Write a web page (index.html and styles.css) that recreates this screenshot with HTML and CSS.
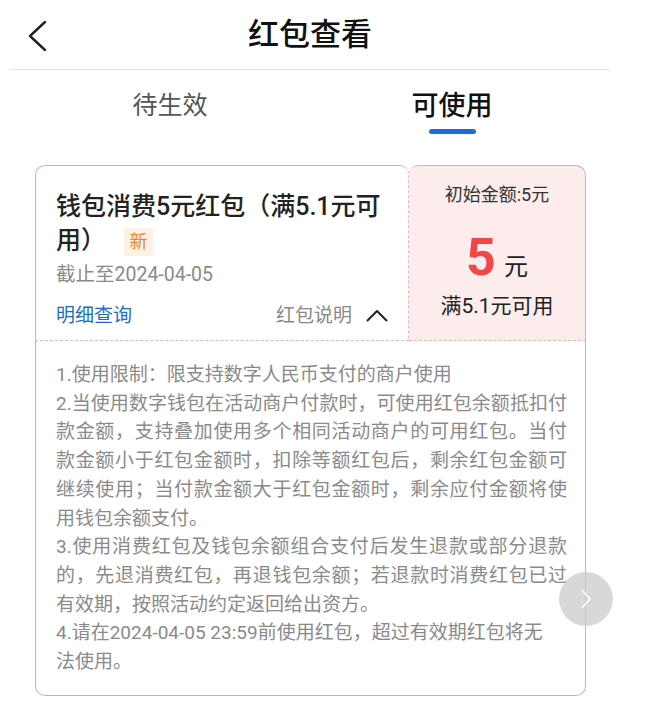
FILE: index.html
```
<!DOCTYPE html>
<html lang="zh-CN">
<head>
    <meta charset="UTF-8">
    <meta name="viewport" content="width=device-width, initial-scale=1.0">
    <title>红包查看</title>
    <link rel="stylesheet" href="styles.css">
</head>
<body>
    <div class="page">
        <header class="topbar">
            <svg class="back" width="24" height="32" viewBox="0 0 24 32">
                <polyline points="18,2 3,16 18,30" fill="none" stroke="#222" stroke-width="2.4" stroke-linecap="round" stroke-linejoin="round"/>
            </svg>
            <h1>红包查看</h1>
        </header>
        <nav class="tabs">
            <div class="tab">待生效</div>
            <div class="tab active">可使用<span class="bar"></span></div>
        </nav>
        <div class="card">
            <div class="card-top">
                <div class="info">
                    <h2 class="name">钱包消费5元红包（满5.1元可用）<span class="tag">新</span></h2>
                    <p class="date">截止至2024-04-05</p>
                    <div class="links">
                        <span class="detail">明细查询</span>
                        <span class="explain">红包说明
                            <svg width="22" height="12" viewBox="0 0 22 12">
                                <polyline points="1,11 11,1 21,11" fill="none" stroke="#222" stroke-width="2" stroke-linejoin="round"/>
                            </svg>
                        </span>
                    </div>
                </div>
                <div class="amount">
                    <p class="init">初始金额:5元</p>
                    <p class="value"><span class="num">5</span><span class="unit">元</span></p>
                    <p class="cond">满5.1元可用</p>
                </div>
            </div>
            <div class="rules">
                <p>1.使用限制：限支持数字人民币支付的商户使用</p>
                <p>2.当使用数字钱包在活动商户付款时，可使用红包余额抵扣付款金额，支持叠加使用多个相同活动商户的可用红包。当付款金额小于红包金额时，扣除等额红包后，剩余红包金额可继续使用；当付款金额大于红包金额时，剩余应付金额将使用钱包余额支付。</p>
                <p>3.使用消费红包及钱包余额组合支付后发生退款或部分退款的，先退消费红包，再退钱包余额；若退款时消费红包已过有效期，按照活动约定返回给出资方。</p>
                <p>4.请在2024-04-05 23:59前使用红包，超过有效期红包将无<br>法使用。</p>
            </div>
        </div>
        <div class="float-btn">
            <svg width="12" height="20" viewBox="0 0 12 20">
                <polyline points="2,1 10,10 2,19" fill="none" stroke="#fff" stroke-width="1.6" stroke-linejoin="round"/>
            </svg>
        </div>
    </div>
</body>
</html>
```

FILE: styles.css
```
* {
    box-sizing: border-box;
}
body {
    margin: 0;
    background-color: #fff;
    font-family: "Roboto", "Noto Sans CJK SC", sans-serif;
    color: #222;
}
p, h1, h2 {
    margin: 0;
}
.page {
    position: relative;
    width: 620px;
    height: 721px;
}
.topbar {
    display: grid;
    grid-template-columns: 1fr auto 1fr;
    align-items: center;
    height: 70px;
    margin: 0 10px;
    border-bottom: 1px solid #e3e3e3;
}
.back {
    margin-left: 17px;
    margin-top: 2px;
}
.topbar h1 {
    font-size: 31px;
    font-weight: 500;
    color: #111;
    line-height: 69px;
}
.tabs {
    display: grid;
    grid-template-columns: 282px 282px;
    padding: 18px 0 0 29px;
}
.tab {
    display: flex;
    flex-direction: column;
    align-items: center;
    font-size: 25px;
    line-height: 36px;
    color: #555;
}
.tab.active {
    font-size: 27px;
    font-weight: 500;
    color: #111;
}
.bar {
    width: 47px;
    height: 5px;
    margin-top: 5px;
    border-radius: 3px;
    background-color: #1a6dd8;
}
.card {
    margin: 31px 34px 0 35px;
}
.card-top {
    display: flex;
}
.info {
    width: 374px;
    padding: 24px 20px 11px 20px;
    border-top: 1px solid #e2a9ab;
    border-left: 1px solid #e2a9ab;
    border-right: 1px dashed #e6b5b8;
    border-bottom: 1px dashed #e6b5b8;
    border-radius: 10px 9px 0 0;
}
.name {
    font-size: 25px;
    font-weight: 500;
    line-height: 34px;
    color: #222;
}
.tag {
    display: inline-block;
    width: 29px;
    height: 28px;
    margin-left: 18px;
    font-size: 18px;
    font-weight: 400;
    line-height: 28px;
    text-align: center;
    color: #e8892f;
    background-color: #fdf1e6;
    border-radius: 3px;
    vertical-align: 1px;
}
.date {
    margin-top: 4px;
    font-size: 19.5px;
    line-height: 26px;
    color: #8a8a8a;
}
.links {
    display: flex;
    justify-content: space-between;
    align-items: center;
    margin-top: 15px;
    font-size: 19px;
    line-height: 26px;
}
.detail {
    color: #1f6bbf;
}
.explain {
    display: flex;
    align-items: center;
    gap: 14px;
    color: #888;
}
.amount {
    flex: 1;
    padding-top: 16px;
    text-align: center;
    background-color: #fdecec;
    border-top: 1px solid #e2a9ab;
    border-right: 1px solid #e2a9ab;
    border-bottom: 1px dashed #e6b5b8;
    border-radius: 9px 10px 0 0;
}
.init {
    font-size: 18px;
    line-height: 26px;
    color: #333;
}
.value {
    display: flex;
    justify-content: center;
    align-items: baseline;
    height: 56px;
    margin-top: 22px;
}
.num {
    font-size: 52px;
    font-weight: 700;
    line-height: 56px;
    color: #f04848;
}
.unit {
    margin-left: 8px;
    font-size: 24px;
    line-height: 30px;
    color: #222;
}
.cond {
    margin-top: 6px;
    font-size: 21px;
    line-height: 28px;
    color: #222;
}
.rules {
    padding: 20px 18px 18px 20px;
    font-size: 19px;
    line-height: 28.7px;
    text-align: justify;
    color: #8a8a8a;
    border: 1px solid #e2a9ab;
    border-top: none;
    border-radius: 0 0 10px 10px;
}
.float-btn {
    position: absolute;
    left: 559px;
    top: 572px;
    display: flex;
    align-items: center;
    justify-content: center;
    width: 54px;
    height: 54px;
    border-radius: 50%;
    background-color: rgba(200, 200, 200, 0.7);
}
```
